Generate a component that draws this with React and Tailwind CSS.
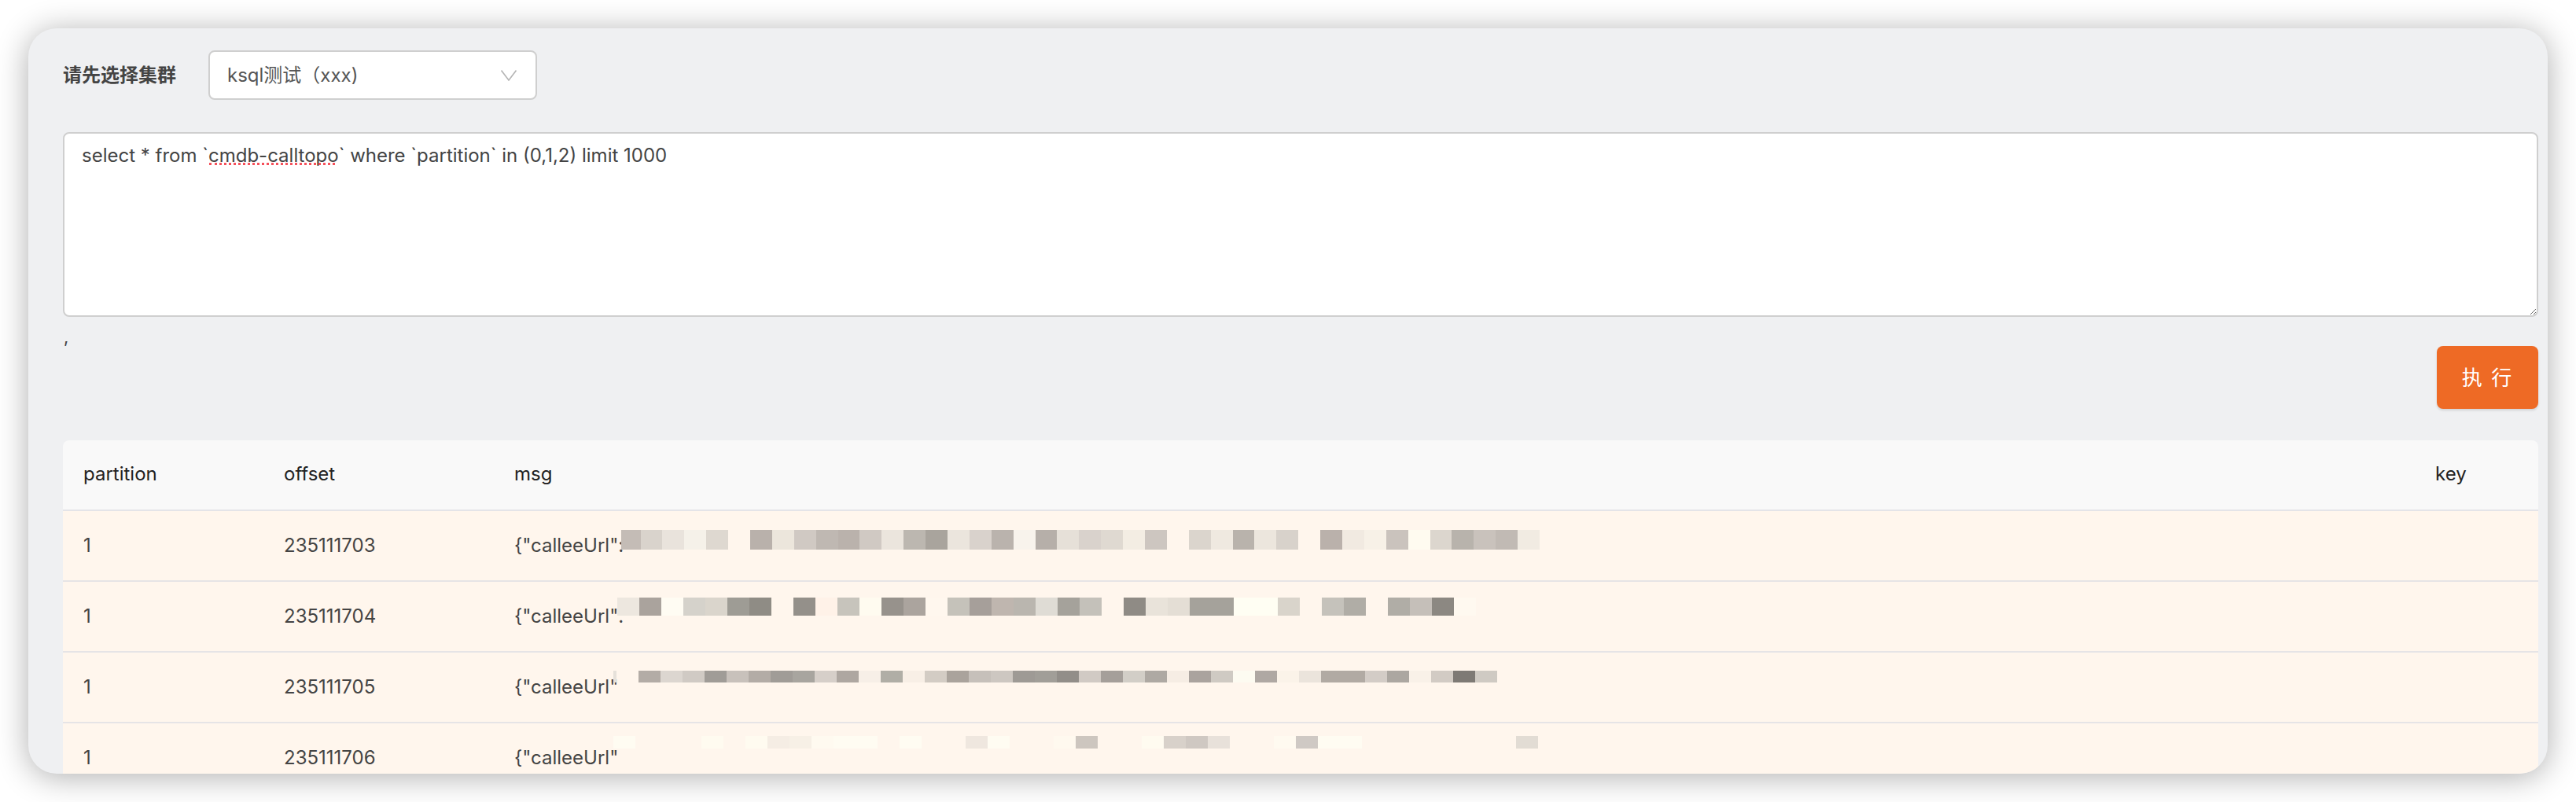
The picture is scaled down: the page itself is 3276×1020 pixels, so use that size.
const rows = [
  {
    offset: '235111703', text: '{"calleeUrl":\'', left: 162, top: 24, height: 25, first: 24.5, pitch: 27.9,
    colors: ['c4bcb6','d9d3cc','e9e3dc','f5f1e9','ded8d0','','b9b1ab','ece6dc','d0c9c3','bfb8b2','bab2ac','d0c9c3','ebe5dd','bcb7b0','a9a49d','ebe5dd','d9d2cc','bab3ad','f8f3ec','b6afa9','e6e0d8','d9d2cc','dfd9d1','f3ede3','cdc6c0','','dbd5cd','efe9e0','b9b3ac','ece6dd','d8d2cb','','bab1ab','f1eae1','f7f1e7','cac3bd','fffbf0','dcd6ce','b8b3ac','c9c2bc','c1bab4','f1ebe2'],
  },
  {
    offset: '235111704', text: '{"calleeUrl":', left: 156.5, top: 20, height: 23, first: 28, pitch: 28,
    colors: ['ede7df','aaa39d','fffcf3','d5d2cb','dad5cc','9e9c95','8f8c85','','94908a','fff2e8','c7c4bc','fffbf0','97928c','aba49e','fff7ee','c5c2ba','a69f9a','bfb6af','bab6af','dfdcd5','a5a29b','c4c1ba','','8f8b85','e9e3da','e4ded5','a5a29b','a5a29b','fffef3','fffef3','d9d4cb','','c5c2bb','b0ada6','','b0ada6','c5bfb9','8c8882','fff9f0'],
  },
  {
    offset: '235111705', text: '{"calleeUrl"', left: 152, top: 23, height: 15, first: 4, pitch: 28,
    colors: ['e6e1da','','b3aca6','dcd6d0','d0cac4','a09c97','c8c1bb','b3aca6','a09c97','a8a59f','d6cfc9','aea7a1','f7efe7','b0aea6','f8efe6','d3ccc4','aaa39c','c6c0ba','cdc7c1','9e9a95','a19e98','928e89','d1cac4','a59f9a','d2cec7','aea9a3','f6ede4','aaa39e','cfcac3','fdfbf1','afa8a3','fbf3e9','ebe4dc','b1aaa3','b1aaa3','d3ccc6','aca7a1','f9f1e8','d2cbc4','7e7a75','cfcac3'],
  },
  {
    offset: '235111706', text: '{"calleeUrl"', left: 152, top: 16, height: 16, first: 28, pitch: 28,
    colors: ['fffcf2','','','','fffbf0','','fffbf0','f5ede4','f7f0e6','fffaf0','fffcf2','fffcf2','','fffcf2','','','efe7df','fffcf2','','','fff9ef','cdc6bf','','','fffbf0','d8d1ca','cfc8c2','e8e1da','','','fffaf0','cfc9c4','fffcf2','fffcf2','','','','','','','','e2dcd4'],
  },
];

function Mosaic({ row }) {
  return (
    <div className="absolute flex" style={{ left: row.left, top: row.top, height: row.height }}>
      {row.colors.map((c, i) => (
        <div key={i} style={{ width: i === 0 ? row.first : row.pitch, backgroundColor: c ? `#${c}` : 'transparent' }} />
      ))}
    </div>
  );
}

export default function App() {
  return (
    <div className="h-[1020px] w-[3276px] overflow-hidden bg-white p-9 font-['Inter','Noto_Sans_CJK_SC',sans-serif]">
      <div className="flex h-[948px] flex-col overflow-hidden rounded-[36px] bg-[#eff0f2] pt-7 pr-3 pl-11 shadow-[0_4px_40px_rgba(0,0,0,0.32)]">
        <div className="flex shrink-0 items-center">
          <span className="w-[185px] text-[24px] font-bold text-[#444]">请先选择集群</span>
          <div className="flex h-[63px] w-[418px] items-center justify-between rounded-lg border-2 border-[#cfcfcf] bg-white pr-[24px] pl-[22px]">
            <span className="text-[24px] text-[#555]">ksql测试（xxx)</span>
            <svg width="20" height="14" viewBox="0 0 20 14" fill="none" stroke="#b4b4b4" strokeWidth="1.6">
              <path d="M0.5 0.5 L10 13 L19.5 0.5" />
            </svg>
          </div>
        </div>

        <div className="relative mt-[41px] h-[235px] shrink-0">
          <textarea
            spellCheck={false}
            defaultValue={'select * from `cmdb-calltopo` where `partition` in (0,1,2) limit 1000'}
            className="block h-full w-full rounded-lg border-2 border-[#cfcfcf] bg-white px-[22px] py-[10px] text-[24px] leading-[36px] text-[#444] outline-none"
          />
          <div className="absolute top-[39px] left-[186px] h-0 w-[160px] border-b-[3px] border-dotted border-[#f5505a]" />
        </div>

        <div className="flex h-[117px] shrink-0 items-start justify-between">
          <span className="mt-[10px] ml-[1px] text-[22px] leading-[30px] text-[#444]">,</span>
          <button className="mt-[37px] h-20 w-[129px] rounded-lg bg-[#ee6a25] text-[26px] tracking-[2px] text-white shadow-[0_2px_3px_rgba(0,0,0,0.12)]">
            执 行
          </button>
        </div>

        <div className="mt-10 shrink-0 overflow-hidden rounded-t-lg text-[24px]">
          <div className="grid h-[90px] grid-cols-[255px_293px_1fr_157px] items-center border-b-2 border-[#e4e4e8] bg-[#f9f9f9] pb-[2px] text-[#222]">
            <div className="pl-[26px]">partition</div>
            <div className="pl-[26px]">offset</div>
            <div className="pl-[26px]">msg</div>
            <div className="pl-[26px]">key</div>
          </div>
          {rows.map((row) => (
            <div key={row.offset} className="grid h-[90px] grid-cols-[255px_293px_1fr_157px] items-center border-b-2 border-[#e6e4e6] bg-[#fff6ed] text-[#444]">
              <div className="pl-[26px]">1</div>
              <div className="pl-[26px]">{row.offset}</div>
              <div className="relative flex h-full items-center pl-[26px]">
                <span className="whitespace-nowrap">{row.text}</span>
                <Mosaic row={row} />
              </div>
              <div />
            </div>
          ))}
        </div>
      </div>
    </div>
  );
}
